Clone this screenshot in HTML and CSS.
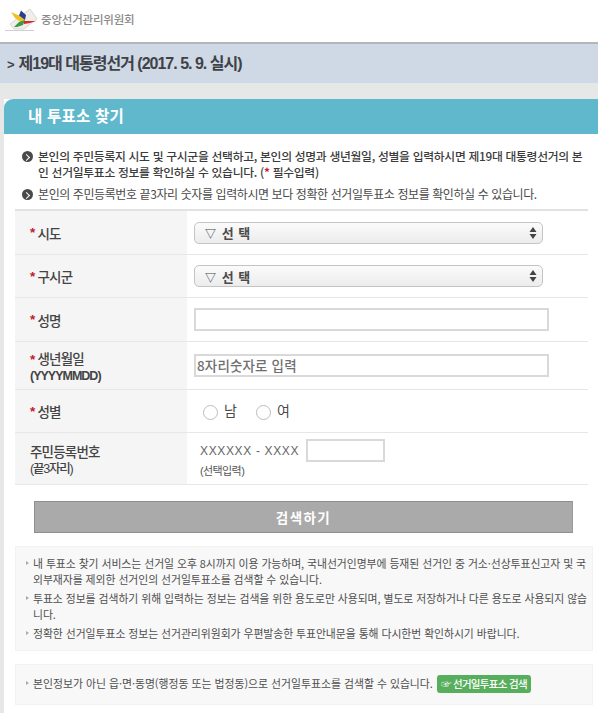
FILE: index.html
```html
<!DOCTYPE html>
<html lang="ko">
<head>
<meta charset="utf-8">
<title>내 투표소 찾기</title>
<link rel="stylesheet" href="styles.css">
</head>
<body>
<header class="top">
  <svg class="logo" width="36" height="30" viewBox="0 0 36 30">
    <path d="M8 22 L28 7 L35 17 L22 27 L12 27 Z" fill="#efeeeb" stroke="#d9d7d2" stroke-width="1"/>
    <path d="M9 10 L17 13.5 L23 18 L19 20.5 L13 16 Z" fill="#f0c020"/>
    <path d="M19 8.5 L24 13 L23 18 L17 13.5 Z" fill="#2a3f8e"/>
    <path d="M12 25 L17 20 L23 18 L21 23 L15 25 Z" fill="#3a9a45"/>
    <path d="M22 19 L34 19 L28 21 L22 22 Z" fill="#d42a2a"/>
    <path d="M3 28.5 H32" stroke="#cfcfcf" stroke-width="1"/>
  </svg>
  <span class="org">중앙선거관리위원회</span>
</header>
<div class="band"><span class="gt">&gt;</span>제19대 대통령선거 (2017. 5. 9. 실시)</div>
<main class="panel">
  <h1 class="title">내 투표소 찾기</h1>
  <div class="content">
    <ul class="intro">
      <li class="strong"><i class="dot"></i><span>본인의 주민등록지 시도 및 구시군을 선택하고, 본인의 성명과 생년월일, 성별을 입력하시면 제19대 대통령선거의 본인 선거일투표소 정보를 확인하실 수 있습니다. (<b class="req">*</b> 필수입력)</span></li>
      <li><i class="dot"></i><span>본인의 주민등록번호 끝3자리 숫자를 입력하시면 보다 정확한 선거일투표소 정보를 확인하실 수 있습니다.</span></li>
    </ul>
    <div class="form">
      <div class="row r44">
        <div class="lab"><b class="req">*</b><span>시도</span></div>
        <div class="val"><div class="sel"><span><span class="tri">▽</span> 선 택</span><svg width="8" height="14" viewBox="0 0 8 14"><path d="M4 1 L7.5 6 H0.5Z M4 13 L7.5 8 H0.5Z" fill="#444"/></svg></div></div>
      </div>
      <div class="row r43">
        <div class="lab"><b class="req">*</b><span>구시군</span></div>
        <div class="val"><div class="sel"><span><span class="tri">▽</span> 선 택</span><svg width="8" height="14" viewBox="0 0 8 14"><path d="M4 1 L7.5 6 H0.5Z M4 13 L7.5 8 H0.5Z" fill="#444"/></svg></div></div>
      </div>
      <div class="row r44">
        <div class="lab"><b class="req">*</b><span>성명</span></div>
        <div class="val"><div class="inp"></div></div>
      </div>
      <div class="row r48">
        <div class="lab"><div><b class="req">*</b><span>생년월일</span><small class="en">(YYYYMMDD)</small></div></div>
        <div class="val"><div class="inp ph">8자리숫자로 입력</div></div>
      </div>
      <div class="row r43">
        <div class="lab"><b class="req">*</b><span>성별</span></div>
        <div class="val radios">
          <i class="radio"></i><span class="rtxt">남</span>
          <i class="radio"></i><span class="rtxt">여</span>
        </div>
      </div>
      <div class="row r52">
        <div class="lab"><div>주민등록번호<small>(끝3자리)</small></div></div>
        <div class="val rrn">
          <div class="rrn-top"><span>XXXXXX - XXXX</span><div class="inp short"></div></div>
          <small>(선택입력)</small>
        </div>
      </div>
    </div>
    <button class="search" type="button">검색하기</button>
    <div class="note">
      <p>내 투표소 찾기 서비스는 선거일 오후 8시까지 이용 가능하며, 국내선거인명부에 등재된 선거인 중 거소·선상투표신고자 및 국외부재자를 제외한 선거인의 선거일투표소를 검색할 수 있습니다.</p>
      <p>투표소 정보를 검색하기 위해 입력하는 정보는 검색을 위한 용도로만 사용되며, 별도로 저장하거나 다른 용도로 사용되지 않습니다.</p>
      <p>정확한 선거일투표소 정보는 선거관리위원회가 우편발송한 투표안내문을 통해 다시한번 확인하시기 바랍니다.</p>
    </div>
    <div class="note second">
      <p>본인정보가 아닌 읍·면·동명(행정동 또는 법정동)으로 선거일투표소를 검색할 수 있습니다. <span class="green">☞ 선거일투표소 검색</span></p>
    </div>
  </div>
</main>
</body>
</html>
```
FILE: styles.css
```css
* { box-sizing: border-box; }
html, body { margin: 0; padding: 0; }
body {
  width: 598px;
  height: 713px;
  overflow: hidden;
  background: #e6e8e8;
  font-family: "Noto Sans CJK KR", "Liberation Sans", sans-serif;
  color: #444;
}
.top {
  height: 44px;
  background: #fff;
  border-bottom: 2px solid #b4b6b8;
  display: flex;
  align-items: flex-start;
  padding: 2px 0 0 2px;
}
.logo { display: block; }
.org {
  margin: 7px 0 0 3px;
  font-size: 11.5px;
  line-height: 20px;
  font-weight: 500;
  color: #8a8a8a;
  letter-spacing: -0.2px;
}
.band {
  height: 39px;
  background: #cfd8e5;
  line-height: 40px;
  padding-left: 7px;
  font-family: "Liberation Sans", "Noto Sans CJK KR", sans-serif;
  font-size: 16px;
  font-weight: 700;
  letter-spacing: -1px;
  color: #3f4248;
  white-space: nowrap;
}
.gt { font-size: 13px; margin-right: 5px; }
.panel {
  margin: 16px 0 0 4px;
  background: #fff;
  height: 614px;
}
.title {
  margin: 0;
  height: 35px;
  background: #5fb8cc;
  border-radius: 9px 0 0 0;
  color: #fff;
  font-size: 15.5px;
  font-weight: 700;
  line-height: 33px;
  padding-left: 24px;
  letter-spacing: 0.2px;
}
.content { padding: 0 5px 0 11px; }
.intro {
  list-style: none;
  margin: 0;
  padding: 14px 5px 0 7px;
  font-size: 11.8px;
  line-height: 16px;
  letter-spacing: -0.29px;
  color: #4a4a4a;
}
.intro li { display: flex; margin-bottom: 6px; }
.intro li.strong { font-weight: 500; color: #3c3c3c; }
.intro li:last-child { margin-bottom: 0; font-size: 12px; letter-spacing: -0.41px; }
.dot {
  flex: none;
  width: 11px;
  height: 11px;
  margin: 3px 5px 0 0;
  border-radius: 50%;
  background: #4a4a4a;
  position: relative;
}
.dot::after {
  content: "";
  position: absolute;
  left: 2px;
  top: 3.5px;
  width: 4px;
  height: 4px;
  border-top: 1.5px solid #fff;
  border-right: 1.5px solid #fff;
  transform: rotate(45deg);
}
.req { color: #c3202f; font-weight: 700; }
.form {
  margin-top: 7px;
  width: 573px;
  border-top: 2px solid #e2e2e2;
}
.row {
  display: flex;
  border-bottom: 1px solid #e7e7e7;
}
.r44 { height: 44px; }
.r43 { height: 43px; }
.r48 { height: 48px; }
.r52 { height: 52px; }
.lab {
  width: 172px;
  flex: none;
  background: #f5f5f5;
  padding-left: 15px;
  display: flex;
  align-items: center;
  font-family: "Liberation Sans", "Noto Sans CJK KR", sans-serif;
  font-size: 13.5px;
  font-weight: 500;
  letter-spacing: -0.8px;
  color: #444;
}
.lab .req { margin-right: 3px; }
.lab small {
  display: block;
  font-size: 12.5px;
  font-weight: 500;
  letter-spacing: -1.2px;
  line-height: 15px;
  margin-top: 1px;
}
.lab small.en { font-weight: 700; letter-spacing: -1px; }
.val {
  flex: 1;
  display: flex;
  align-items: center;
  padding-left: 7px;
}
.sel {
  width: 349px;
  height: 22px;
  border: 1px solid #c4c4c4;
  border-radius: 5px;
  background: linear-gradient(#fbfbfb, #ececec);
  display: flex;
  align-items: center;
  justify-content: space-between;
  padding: 0 5px 0 10px;
  font-size: 13px;
  font-weight: 700;
  color: #4b4b4b;
  letter-spacing: 0.5px;
}
.tri { font-size: 11px; margin-right: 1px; }
.inp {
  width: 355px;
  height: 23px;
  border: 2px solid #d9d9d9;
  background: #fff;
}
.ph {
  font-size: 13.5px;
  font-weight: 500;
  line-height: 19px;
  color: #6f6f6f;
  padding-left: 1px;
  letter-spacing: 0.15px;
}
.radios { padding-left: 16px; font-size: 14px; color: #4a4a4a; }
.radio {
  width: 15px;
  height: 15px;
  border-radius: 50%;
  border: 1px solid #bdbdbd;
  background: #fff;
  flex: none;
  margin-top: 2px;
}
.rtxt { margin: -3px 20px 0 6px; width: 12px; line-height: 20px; }
.rrn {
  flex-direction: column;
  align-items: flex-start;
  justify-content: flex-start;
  padding: 6px 0 0 13px;
  font-size: 12px;
  color: #666;
  font-family: "Liberation Sans", "Noto Sans CJK KR", sans-serif;
}
.rrn-top { display: flex; align-items: center; gap: 7px; letter-spacing: 0.65px; }
.short { width: 79px; }
.rrn small { font-size: 11px; letter-spacing: -0.6px; margin-top: 2px; line-height: 14px; color: #555; }
.search {
  display: block;
  width: 539px;
  height: 32px;
  margin: 16px 0 0 19px;
  padding: 0;
  border: 0;
  border-top: 1px solid #8f8f8f;
  border-bottom: 1px solid #8f8f8f;
  border-left: 1px solid #8f8f8f;
  border-right: 1px solid #999;
  background: #aaa;
  color: #fff;
  font-family: "Noto Sans CJK KR", sans-serif;
  font-size: 13.5px;
  font-weight: 700;
  letter-spacing: 1.4px;
}
.note {
  width: 578px;
  margin-top: 13px;
  background: #f8f8f8;
  border: 1px solid #f2f2f2;
  padding: 8px 2px 0 17px;
  font-size: 10.85px;
  line-height: 16px;
  letter-spacing: -0.05px;
  color: #4f4f4f;
  height: 105px;
}
.note p {
  margin: 0 0 3px;
  position: relative;
}
.note p::before {
  content: "";
  position: absolute;
  left: -7px;
  top: 6px;
  border-left: 3px solid #aaa;
  border-top: 2.5px solid transparent;
  border-bottom: 2.5px solid transparent;
}
.note.second {
  height: 41px;
  margin-top: 13px;
  padding-top: 10px;
  letter-spacing: 0;
}
.note.second p { margin: 0; }
.green {
  display: inline-block;
  background: #57ae5c;
  color: #fff;
  font-weight: 500;
  font-size: 10.5px;
  line-height: 16px;
  height: 18px;
  padding: 1px 4px;
  border-radius: 3px;
  margin-left: 1px;
  letter-spacing: -0.7px;
  white-space: nowrap;
}
```
